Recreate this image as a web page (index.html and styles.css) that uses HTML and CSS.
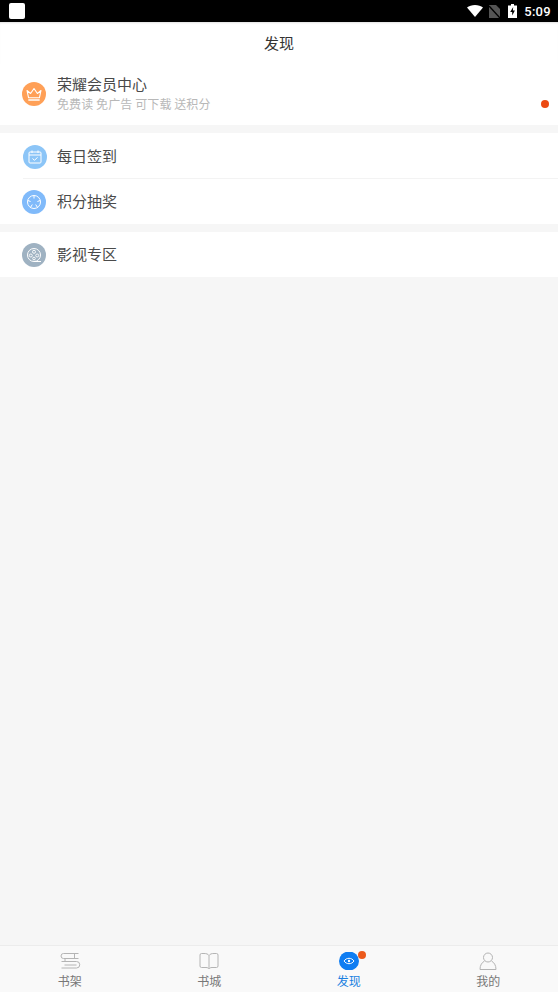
FILE: index.html
```html
<!DOCTYPE html>
<html lang="zh">
<head>
    <meta charset="UTF-8">
    <meta name="viewport" content="width=device-width, initial-scale=1.0">
    <title>发现</title>
    <link rel="stylesheet" href="styles.css">
</head>
<body>
    <div class="status-bar">
        <div class="status-app"></div>
        <div class="status-right">
            <svg class="status-wifi" width="16" height="12" viewBox="0 0 16 12"><path d="M0 2.600C2 .9 4.800 0 8 0s6 .9 8 2.600L8 12z" fill="#fff"/></svg>
            <svg class="status-sim" width="11" height="13" viewBox="0 0 11 13"><path d="M0 0h7l4 4v9H0z" fill="#555"/><path d="M0 1l11 12" stroke="#000" stroke-width="1.400"/></svg>
            <svg class="status-battery" width="9" height="14" viewBox="0 0 9 14"><path d="M3 0h3v1.500h3V14H0V1.500h3z" fill="#fff"/><path d="M5.200 3L2.200 8h2v3.500l2.700-5h-2z" fill="#000"/></svg>
            <span class="status-time">5:09</span>
        </div>
    </div>

    <div class="title-bar">发现</div>

    <div class="group">
        <div class="row row-vip">
            <svg class="row-icon" viewBox="0 0 24 24">
                <circle cx="12" cy="12" r="12" fill="#ffa057"/>
                <path d="M5 8.500l3.600 3L12 6.500l3.400 5 3.600-3-1.600 7.300H6.600z" fill="none" stroke="#fff" stroke-width="1.100" stroke-linejoin="round"/>
                <path d="M6.800 18h10.400" stroke="#fff" stroke-width="1.300" stroke-linecap="round"/>
            </svg>
            <div class="row-text">
                <div class="row-title">荣耀会员中心</div>
                <div class="row-sub">免费读 免广告 可下载 送积分</div>
            </div>
            <span class="red-dot"></span>
        </div>
    </div>

    <div class="group">
        <div class="row row-inset row-line">
            <svg class="row-icon" viewBox="0 0 24 24">
                <circle cx="12" cy="12" r="12" fill="#8cc5f7"/>
                <rect x="6" y="7" width="12" height="11" rx="1" fill="none" stroke="#fff" stroke-width="1"/>
                <path d="M6 10h12M9 5.500v2.500M15 5.500v2.500" stroke="#fff" stroke-width="1"/>
                <path d="M9.500 13.500l2 1.800 3-3" fill="none" stroke="#fff" stroke-width="1"/>
            </svg>
            <div class="row-title">每日签到</div>
        </div>
        <div class="row row-short">
            <svg class="row-icon" viewBox="0 0 24 24">
                <circle cx="12" cy="12" r="12" fill="#80bafa"/>
                <circle cx="12" cy="12" r="6.500" fill="none" stroke="#fff" stroke-width="1"/>
                <path d="M12 5.500v3M5.800 10.500l2.800 1M18.200 10.500l-2.800 1M8.500 17.500l1.800-3M15.500 17.500l-1.800-3" stroke="#fff" stroke-width="1"/>
            </svg>
            <div class="row-title">积分抽奖</div>
        </div>
    </div>

    <div class="group">
        <div class="row row-short">
            <svg class="row-icon" viewBox="0 0 24 24">
                <circle cx="12" cy="12" r="12" fill="#9fb2c2"/>
                <circle cx="12" cy="12" r="6.500" fill="none" stroke="#fff" stroke-width="1"/>
                <circle cx="12" cy="8.800" r="1.500" fill="none" stroke="#fff" stroke-width=".9"/>
                <circle cx="8.800" cy="12.500" r="1.500" fill="none" stroke="#fff" stroke-width=".9"/>
                <circle cx="15.200" cy="12.500" r="1.500" fill="none" stroke="#fff" stroke-width=".9"/>
                <circle cx="12" cy="15.500" r="1.300" fill="none" stroke="#fff" stroke-width=".9"/>
                <path d="M12 18.500h7" stroke="#fff" stroke-width="1"/>
            </svg>
            <div class="row-title">影视专区</div>
        </div>
    </div>

    <div class="spacer"></div>

    <div class="tab-bar">
        <div class="tab">
            <svg class="tab-icon" viewBox="0 0 22 18" fill="none" stroke="#b4b4b4" stroke-width="1">
                <path d="M19.500 1.500H4.500a2.500 2.500 0 0 0 0 5H19.500"/>
                <path d="M2.500 9.500H17.500a3.200 3.200 0 0 1 0 6.500H2.500"/>
                <path d="M15.500 1.500v5M6 6.500v3M5.500 13h12"/>
            </svg>
            <span>书架</span>
        </div>
        <div class="tab">
            <svg class="tab-icon" viewBox="0 0 22 18" fill="none" stroke="#b4b4b4" stroke-width="1">
                <path d="M11 3.500C10 2 8.500 1.500 6 1.500H3.500a1.500 1.500 0 0 0-1.500 1.500v11a1.500 1.500 0 0 0 1.500 1.500H8c1.500 0 2.500.5 3 1.500.5-1 1.500-1.500 3-1.500h4.500a1.500 1.500 0 0 0 1.500-1.500V3a1.500 1.500 0 0 0-1.500-1.500H16c-2.500 0-4 .5-5 2zv13"/>
            </svg>
            <span>书城</span>
        </div>
        <div class="tab tab-active">
            <div class="tab-badge-wrap">
                <svg class="tab-icon" viewBox="0 0 22 18">
                    <ellipse cx="11" cy="9" rx="10" ry="9.500" fill="#0f7df2"/>
                    <path d="M6 9c1.300-1.800 3-2.700 5-2.700s3.700.9 5 2.700c-1.300 1.800-3 2.700-5 2.700S7.300 10.800 6 9z" fill="none" stroke="#fff" stroke-width="1"/>
                    <circle cx="11" cy="9" r="1.200" fill="#fff"/>
                </svg>
                <span class="tab-dot"></span>
            </div>
            <span>发现</span>
        </div>
        <div class="tab">
            <svg class="tab-icon" viewBox="0 0 22 18" fill="none" stroke="#b4b4b4" stroke-width="1">
                <circle cx="11" cy="5.500" r="4.500"/>
                <path d="M7.500 9C5 10.500 3 13 3 17.500h16C19 13 17 10.500 14.500 9"/>
            </svg>
            <span>我的</span>
        </div>
    </div>
</body>
</html>
```

FILE: styles.css
```css
* {
    box-sizing: border-box;
}
html, body {
    height: 100%;
}
body {
    margin: 0;
    display: flex;
    flex-direction: column;
    background-color: #f6f6f6;
    font-family: "Noto Sans CJK SC", "Noto Sans", sans-serif;
    color: #333333;
}

/* Status bar */
.status-bar {
    height: 22px;
    background-color: #000000;
    display: flex;
    align-items: center;
    justify-content: space-between;
    padding: 0 7px 0 9px;
}
.status-app {
    width: 16px;
    height: 16px;
    background-color: #ffffff;
    border-radius: 2px;
}
.status-right {
    display: flex;
    align-items: center;
}
.status-wifi {
    margin-right: 6px;
}
.status-sim {
    margin-right: 8px;
}
.status-battery {
    margin-right: 7px;
}
.status-time {
    color: #ffffff;
    font-family: Roboto, sans-serif;
    font-size: 13px;
    font-weight: 500;
    letter-spacing: 0.3px;
}

/* Header */
.title-bar {
    height: 42px;
    padding-bottom: 2px;
    background-color: #ffffff;
    display: flex;
    align-items: center;
    justify-content: center;
    font-size: 15px;
    box-shadow: inset 0 2px 2px -1px rgba(0, 0, 0, 0.12);
}

/* Rows */
.group {
    background-color: #ffffff;
    margin-bottom: 8px;
    display: flex;
    flex-direction: column;
}
.row {
    height: 45px;
    display: flex;
    align-items: center;
    padding-left: 22px;
    position: relative;
}
.row-vip {
    height: 61px;
}
.row-vip .row-icon {
    margin-top: -2px;
}
.row-vip .row-text {
    margin-top: -3px;
}
.row-inset {
    padding-left: 23px;
}
.row-inset .row-icon {
    margin-top: 1px;
    margin-right: 10px;
}
.row-line {
    height: 46px;
}
.row-line::after {
    content: "";
    position: absolute;
    left: 23px;
    right: 0;
    bottom: 0;
    height: 1px;
    background-color: #f3f3f3;
}
.row-short .row-title {
    margin-top: -2px;
}
.row-icon {
    width: 24px;
    height: 24px;
    margin-right: 11px;
    flex-shrink: 0;
}
.row-text {
    display: flex;
    flex-direction: column;
    gap: 1px;
}
.row-title {
    font-size: 15px;
    line-height: 20px;
    color: #4a4a4a;
}
.row-sub {
    font-size: 12px;
    line-height: 17px;
    letter-spacing: 0.1px;
    color: #b8b8b8;
}
.red-dot {
    position: absolute;
    right: 9px;
    top: 36px;
    width: 8px;
    height: 8px;
    border-radius: 50%;
    background-color: #ec4a12;
}

.spacer {
    flex: 1;
}

/* Bottom tabs */
.tab-bar {
    height: 47px;
    background-color: #f9f9f9;
    border-top: 1px solid #ececec;
    display: flex;
}
.tab {
    flex: 1;
    display: flex;
    flex-direction: column;
    align-items: center;
    padding-top: 6px;
    font-size: 12px;
    line-height: 16px;
    color: #777777;
}
.tab-icon {
    display: block;
    width: 22px;
    height: 18px;
    margin-bottom: 3px;
}
.tab-active {
    color: #1a7fe0;
}
.tab-badge-wrap {
    position: relative;
}
.tab-dot {
    position: absolute;
    top: -1px;
    right: -6px;
    width: 8px;
    height: 8px;
    border-radius: 50%;
    background-color: #ec5a1c;
}
```
